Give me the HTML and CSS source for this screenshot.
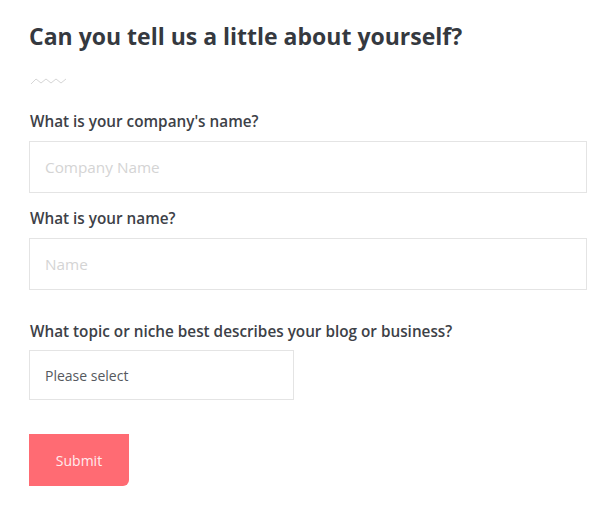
FILE: index.html
```html
<!DOCTYPE html>
<html>
<head>
<meta charset="utf-8">
<link rel="stylesheet" href="styles.css">
</head>
<body>
<form class="form">
  <h1 class="title">Can you tell us a little about yourself?</h1>
  <svg class="wave" width="38" height="8" viewBox="0 0 38 8"><path d="M1 7 L6 2 L11 6 L16 2 L21 6 L26 2 L31 6 L36 2" fill="none" stroke="#d6d6d6" stroke-width="1"/></svg>
  <label class="label label-first">What is your company's name?</label>
  <div class="input"><span class="placeholder">Company Name</span></div>
  <label class="label">What is your name?</label>
  <div class="input"><span class="placeholder">Name</span></div>
  <label class="label label-topic">What topic or niche best describes your blog or business?</label>
  <div class="select">Please select</div>
  <div class="button">Submit</div>
</form>
</body>
</html>
```
FILE: styles.css
```css
html, body { margin: 0; padding: 0; background: #fff; }
body { font-family: "Open Sans", "Liberation Sans", sans-serif; }
.form { display: flex; flex-direction: column; align-items: flex-start; padding: 17px 18px 0 29px; }
.title { margin: 0; font-size: 23px; font-weight: 700; color: #35393f; line-height: 38px; }
.wave { display: block; margin: 22px 0 0 1px; }
.label { font-size: 15.3px; font-weight: 600; color: #3d4147; line-height: 20px; margin-top: 23px; margin-left: 1px; }
.label-first { margin-top: 26px; }
.input { box-sizing: border-box; width: 558px; height: 52px; border: 1px solid #e4e4e4; display: flex; align-items: center; padding-left: 15px; margin-top: 10px; }
.input + .label { margin-top: 15px; }
.placeholder { font-size: 15.3px; color: #d4d4d4; }
.label-topic { margin-top: 31px !important; }
.select { box-sizing: border-box; width: 265px; height: 50px; border: 1px solid #e4e4e4; display: flex; align-items: center; padding-left: 15px; margin-top: 9px; font-size: 14px; color: #55595e; }
.button { box-sizing: border-box; width: 100px; height: 52px; background: #ff6b73; color: #ffecee; font-size: 14px; display: flex; align-items: center; justify-content: center; margin-top: 34px; border-bottom-right-radius: 6px; }
```
